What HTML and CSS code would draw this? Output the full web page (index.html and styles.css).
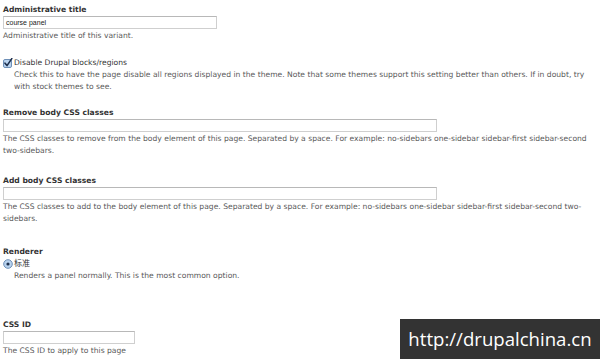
FILE: index.html
```html
<!DOCTYPE html>
<html>
<head>
<meta charset="utf-8">
<link rel="stylesheet" href="styles.css">
</head>
<body>
<div class="page">
  <div class="item item-title">
    <div class="label">Administrative title</div>
    <div class="input input-short"><span class="val">course panel</span></div>
    <div class="desc">Administrative title of this variant.</div>
  </div>

  <div class="item item-check">
    <div class="option">
      <svg class="box" width="10" height="10" viewBox="0 0 10 10">
        <rect x="0.5" y="1.5" width="8" height="8" rx="1.5" fill="#b9d3ef" stroke="#6d8fb7"/>
        <path d="M2 5.2 L4 7.6 L8.8 0.6" fill="none" stroke="#1d2f4d" stroke-width="1.6" stroke-linecap="round" stroke-linejoin="round"/>
      </svg>
      <span>Disable Drupal blocks/regions</span>
    </div>
    <div class="desc indent">Check this to have the page disable all regions displayed in the theme. Note that some themes support this setting better than others. If in doubt, try with stock themes to see.</div>
  </div>

  <div class="item item-remove">
    <div class="label">Remove body CSS classes</div>
    <div class="input input-long"></div>
    <div class="desc">The CSS classes to remove from the body element of this page. Separated by a space. For example: no-sidebars one-sidebar sidebar-first sidebar-second two-sidebars.</div>
  </div>

  <div class="item item-add">
    <div class="label">Add body CSS classes</div>
    <div class="input input-long"></div>
    <div class="desc">The CSS classes to add to the body element of this page. Separated by a space. For example: no-sidebars one-sidebar sidebar-first sidebar-second two-sidebars.</div>
  </div>

  <div class="item item-renderer">
    <div class="label">Renderer</div>
    <div class="option">
      <svg class="box" width="10" height="10" viewBox="0 0 10 10">
        <circle cx="5" cy="5" r="4.3" fill="#b9d3ef" stroke="#6d8fb7"/>
        <circle cx="5" cy="5" r="1.6" fill="#1d2f4d"/>
      </svg>
      <span class="cjk">标准</span>
    </div>
    <div class="desc indent">Renders a panel normally. This is the most common option.</div>
  </div>

  <div class="item item-cssid">
    <div class="label">CSS ID</div>
    <div class="input input-id"></div>
    <div class="desc">The CSS ID to apply to this page</div>
  </div>
</div>
<div class="watermark">http://drupalchina.cn</div>
</body>
</html>
```

FILE: styles.css
```css
html, body {
  margin: 0;
  padding: 0;
  background: #ffffff;
  width: 600px;
  height: 359px;
  overflow: hidden;
}
body {
  position: relative;
  font-family: "DejaVu Sans", "Noto Sans CJK SC", sans-serif;
  font-size: 7.6px;
  color: #5a5a5a;
}
.page {
  padding-left: 3px;
}
.item {
  display: flex;
  flex-direction: column;
  align-items: flex-start;
}
.label {
  font-weight: bold;
  color: #333333;
  font-size: 7.6px;
  line-height: 12px;
}
.input {
  box-sizing: border-box;
  height: 13px;
  border: 1px solid #cfcfcf;
  border-top-color: #b8b8b8;
  background: #ffffff;
  font-family: "Liberation Sans", sans-serif;
  font-size: 7px;
  line-height: 11px;
  padding-left: 2px;
  color: #222222;
}
.input-short { width: 214px; }
.input-long { width: 434px; }
.input-id { width: 132px; }
.desc {
  line-height: 12px;
  margin-top: 1px;
  width: 588px;
}
.desc.indent {
  margin-left: 11px;
  width: 577px;
  margin-top: 0;
}
.option {
  display: flex;
  align-items: center;
  gap: 1px;
  line-height: 12px;
  color: #333333;
}
.box { display: block; }
.cjk { font-size: 8px; }
.item-title { margin-top: 4px; }
.item-check { margin-top: 15px; }
.item-remove { margin-top: 14px; }
.item-add { margin-top: 18px; }
.item-renderer { margin-top: 21px; }
.item-cssid { margin-top: 37px; }
.watermark {
  position: absolute;
  left: 400px;
  top: 319px;
  width: 200px;
  height: 40px;
  background: #333333;
  color: #ffffff;
  font-family: "Open Sans", "DejaVu Sans", sans-serif;
  font-size: 18.6px;
  line-height: 40px;
  text-align: center;
  box-sizing: border-box;
}
```
